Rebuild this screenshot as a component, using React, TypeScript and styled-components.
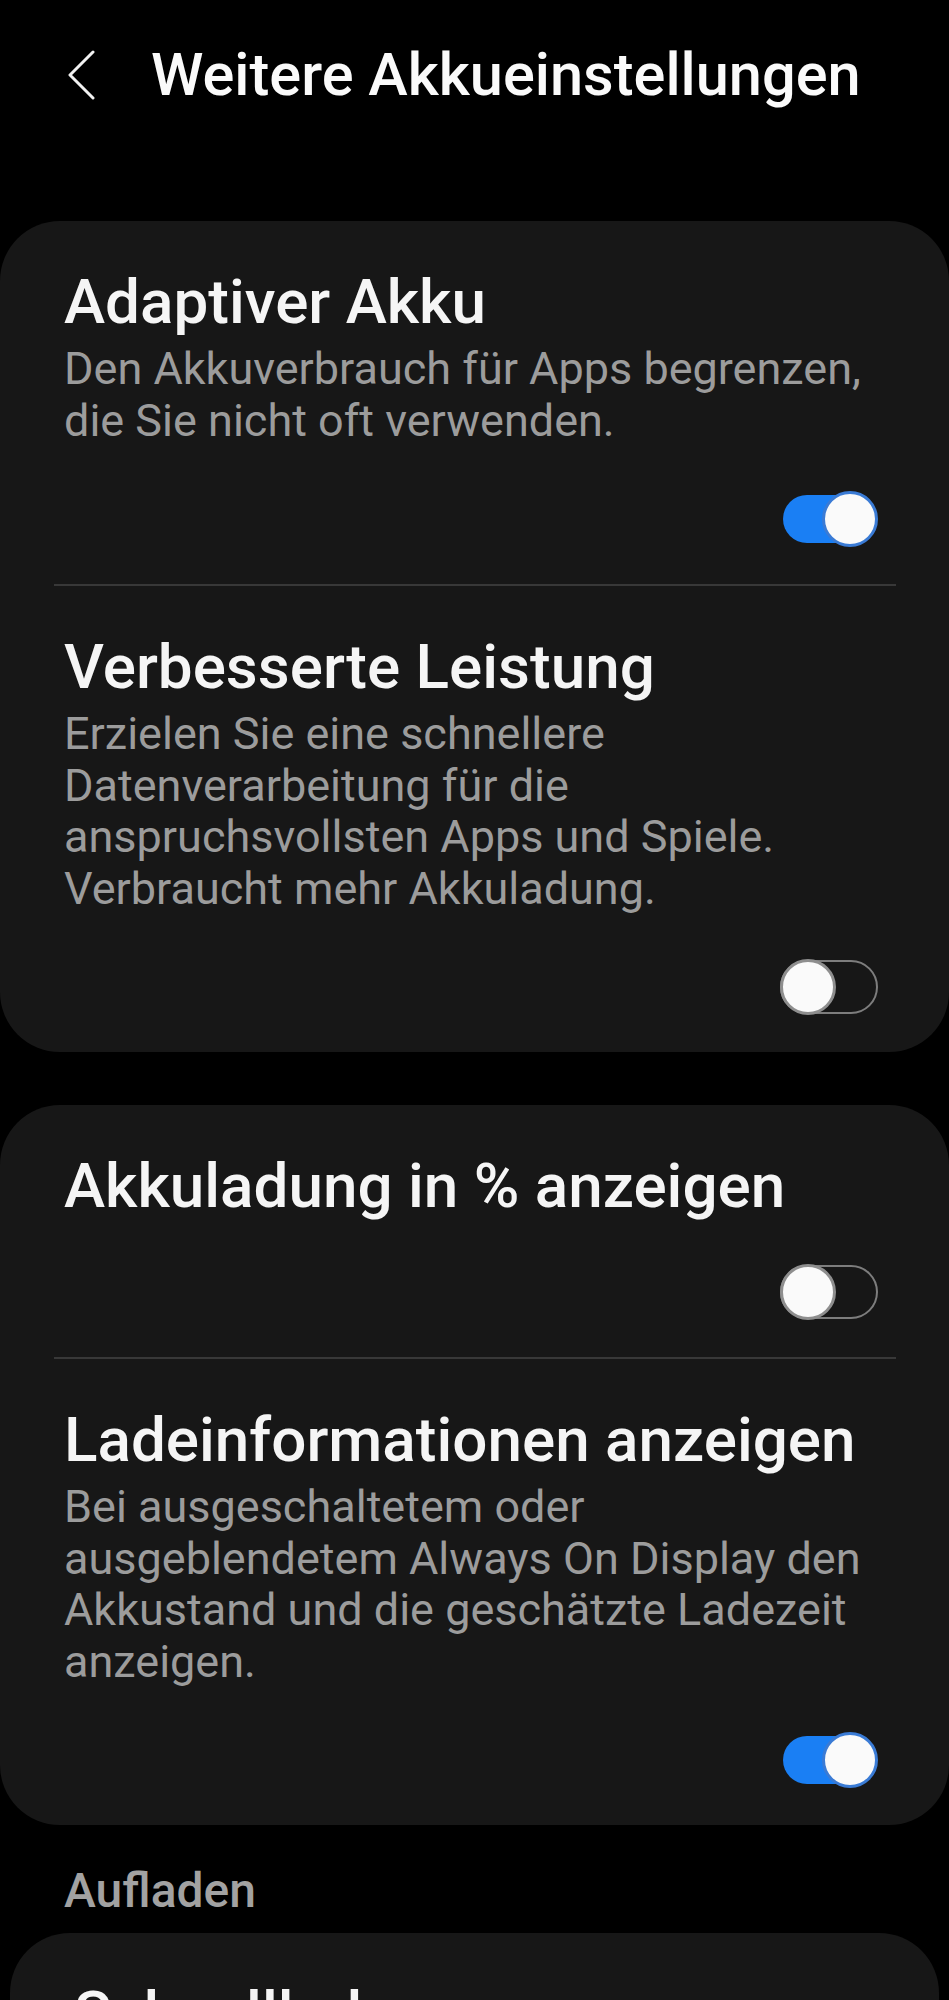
import React from "react";
import styled, { createGlobalStyle } from "styled-components";

interface Setting {
  id: string;
  title: string;
  description?: string;
  enabled: boolean;
}

const GlobalStyle = createGlobalStyle`
  body {
    margin: 0;
    background: #000;
    font-family: Roboto, "Noto Sans", "Liberation Sans", sans-serif;
    -webkit-font-smoothing: antialiased;
  }
`;

const Page = styled.div`
  width: 949px;
  height: 2000px;
  overflow: hidden;
  background: #000;
`;

const Header = styled.header`
  display: flex;
  align-items: center;
  gap: 55px;
  height: 70px;
  padding: 40px 0 0 64px;
`;

const BackButton = styled.svg`
  flex-shrink: 0;
`;

const HeaderTitle = styled.h1`
  margin: 0;
  font-size: 59.5px;
  font-weight: 500;
  line-height: 70px;
  color: #fafafa;
  white-space: nowrap;
`;

const Content = styled.main`
  display: flex;
  flex-direction: column;
  margin-top: 111px;
`;

const Card = styled.section<{ $inset?: boolean }>`
  background: #171717;
  border-radius: 60px;
  margin: 0 ${(p) => (p.$inset ? "10px" : "0")};
  overflow: hidden;

  & + & {
    margin-top: 53px;
  }
`;

const Item = styled.div`
  display: flex;
  flex-direction: column;
  padding: 45px 64px 37px;
`;

const ItemTitle = styled.div`
  font-size: 62px;
  font-weight: 500;
  line-height: 72px;
  color: #f5f5f5;
`;

const ItemDescription = styled.div`
  margin-top: 5px;
  font-size: 45px;
  line-height: 51.5px;
  color: #9c9c9c;
`;

const SwitchRow = styled.div<{ $compact?: boolean }>`
  display: flex;
  justify-content: flex-end;
  margin-top: ${(p) => (p.$compact ? "42px" : "45px")};
`;

const SwitchBox = styled.div`
  position: relative;
  display: flex;
  align-items: center;
  width: 98px;
  height: 56px;
  margin-right: 7px;
  flex-shrink: 0;
`;

const Track = styled.div<{ $on: boolean }>`
  box-sizing: border-box;
  margin-left: ${(p) => (p.$on ? "3px" : "0")};
  width: ${(p) => (p.$on ? "90px" : "98px")};
  height: ${(p) => (p.$on ? "48px" : "54px")};
  border-radius: 27px;
  background: ${(p) => (p.$on ? "#1a7ff4" : "transparent")};
  border: ${(p) => (p.$on ? "none" : "2px solid #7d7d7d")};
`;

const Thumb = styled.div<{ $on: boolean }>`
  position: absolute;
  top: 0;
  ${(p) => (p.$on ? "right: 0;" : "left: 0;")}
  box-sizing: border-box;
  width: 56px;
  height: 56px;
  border-radius: 50%;
  background: #fafafa;
  border: 3px solid ${(p) => (p.$on ? "#3a7bd5" : "#8e8e8e")};
`;

const Divider = styled.div`
  height: 2px;
  margin: 0 53px 0 54px;
  background: #383838;
`;

const SectionLabel = styled.div`
  padding: 38px 64px 14px;
  font-size: 48px;
  font-weight: 500;
  line-height: 56px;
  color: #a2a2a2;
`;

const Switch: React.FC<{ on: boolean }> = ({ on }) => (
  <SwitchBox>
    <Track $on={on} />
    <Thumb $on={on} />
  </SwitchBox>
);

const SettingItem: React.FC<{ setting: Setting }> = ({ setting }) => (
  <Item>
    <ItemTitle>{setting.title}</ItemTitle>
    {setting.description && (
      <ItemDescription>{setting.description}</ItemDescription>
    )}
    <SwitchRow $compact={!setting.description}>
      <Switch on={setting.enabled} />
    </SwitchRow>
  </Item>
);

const SettingsCard: React.FC<{ settings: Setting[]; inset?: boolean }> = ({
  settings,
  inset,
}) => (
  <Card $inset={inset}>
    {settings.map((s, i) => (
      <React.Fragment key={s.id}>
        {i > 0 && <Divider />}
        <SettingItem setting={s} />
      </React.Fragment>
    ))}
  </Card>
);

const batteryGroup: Setting[] = [
  {
    id: "adaptive",
    title: "Adaptiver Akku",
    description:
      "Den Akkuverbrauch für Apps begrenzen, die Sie nicht oft verwenden.",
    enabled: true,
  },
  {
    id: "performance",
    title: "Verbesserte Leistung",
    description:
      "Erzielen Sie eine schnellere Datenverarbeitung für die anspruchsvollsten Apps und Spiele. Verbraucht mehr Akkuladung.",
    enabled: false,
  },
];

const displayGroup: Setting[] = [
  { id: "percent", title: "Akkuladung in % anzeigen", enabled: false },
  {
    id: "charginginfo",
    title: "Ladeinformationen anzeigen",
    description:
      "Bei ausgeschaltetem oder ausgeblendetem Always On Display den Akkustand und die geschätzte Ladezeit anzeigen.",
    enabled: true,
  },
];

const chargingGroup: Setting[] = [
  { id: "fastcharge", title: "Schnellladen", enabled: true },
];

export default function App() {
  return (
    <Page>
      <GlobalStyle />
      <Header>
        <BackButton width="32" height="50" viewBox="0 0 32 50">
          <polyline
            points="29,2 6,25 29,48"
            fill="none"
            stroke="#f2f2f2"
            strokeWidth="3"
            strokeLinecap="round"
            strokeLinejoin="round"
          />
        </BackButton>
        <HeaderTitle>Weitere Akkueinstellungen</HeaderTitle>
      </Header>
      <Content>
        <SettingsCard settings={batteryGroup} />
        <SettingsCard settings={displayGroup} />
        <SectionLabel>Aufladen</SectionLabel>
        <SettingsCard settings={chargingGroup} inset />
      </Content>
    </Page>
  );
}
